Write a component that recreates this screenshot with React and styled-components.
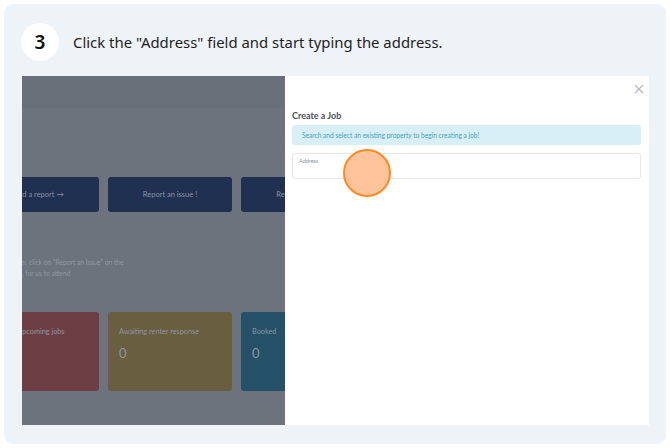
import React from 'react';
import styled, { createGlobalStyle } from 'styled-components';

const GlobalStyle = createGlobalStyle`
  html, body {
    margin: 0;
    padding: 0;
    background: #ffffff;
  }
  body {
    font-family: "Noto Sans", "Liberation Sans", sans-serif;
  }
`;

const buttons = ['Send a report →', 'Report an issue !', 'Request a quote'];

const cards = [
  { label: 'Upcoming jobs', value: '', color: '#6e3e45', width: 93 },
  { label: 'Awaiting renter response', value: '0', color: '#6a5e41', width: 124 },
  { label: 'Booked', value: '0', color: '#245068', width: 124 },
];

export default function App() {
  return (
    <>
      <GlobalStyle />
      <Card>
        <StepHeader>
          <StepNumber>3</StepNumber>
          <StepText>Click the "Address" field and start typing the address.</StepText>
        </StepHeader>
        <Shot>
          <Backdrop>
            <TopBand />
            <ButtonRow>
              {buttons.map((b) => (
                <ActionButton key={b}>{b}</ActionButton>
              ))}
            </ButtonRow>
            <HelpText>
              <div>n. click on "Report an Issue" on the</div>
              <div>. for us to attend</div>
            </HelpText>
            <StatRow>
              {cards.map((c) => (
                <StatCard key={c.label} $color={c.color} $width={c.width}>
                  <StatLabel>{c.label}</StatLabel>
                  <StatValue>{c.value}</StatValue>
                </StatCard>
              ))}
            </StatRow>
          </Backdrop>
          <Modal>
            <CloseRow>
              <svg width="10" height="10" viewBox="0 0 10 10">
                <path d="M1 1 L9 9 M9 1 L1 9" stroke="#b3b8bf" strokeWidth="1.1" fill="none" />
              </svg>
            </CloseRow>
            <ModalTitle>Create a Job</ModalTitle>
            <InfoBox>Search and select an existing property to begin creating a job!</InfoBox>
            <AddressField>
              <FieldLabel>Address</FieldLabel>
            </AddressField>
            <ClickMarker />
          </Modal>
        </Shot>
      </Card>
    </>
  );
}

const Card = styled.div`
  margin: 4px;
  width: 662px;
  height: 440px;
  box-sizing: border-box;
  background: #eef3f8;
  border-radius: 9px;
  padding: 16px 0 0 18px;
`;

const StepHeader = styled.div`
  display: flex;
  align-items: center;
  gap: 14px;
  height: 44px;
`;

const StepNumber = styled.div`
  width: 38px;
  height: 38px;
  border-radius: 50%;
  background: #ffffff;
  display: flex;
  align-items: center;
  justify-content: center;
  font-size: 19px;
  font-weight: 600;
  color: #111;
  margin-left: -1px;
`;

const StepText = styled.div`
  font-size: 14.9px;
  color: #1e1e1e;
`;

const Shot = styled.div`
  margin-top: 12px;
  width: 627px;
  height: 349px;
  display: flex;
  font-family: Lato, "Liberation Sans", sans-serif;
`;

const Backdrop = styled.div`
  width: 263px;
  overflow: hidden;
  background: #6c737d;
  display: flex;
  flex-direction: column;
`;

const TopBand = styled.div`
  height: 32px;
  flex-shrink: 0;
  background: #697079;
`;

const ButtonRow = styled.div`
  display: flex;
  gap: 9px;
  margin: 69px 0 0 -47px;
`;

const ActionButton = styled.div`
  flex-shrink: 0;
  width: 124px;
  height: 35px;
  border-radius: 3px;
  background: #1f3050;
  color: #8791a3;
  font-size: 7.5px;
  display: flex;
  align-items: center;
  justify-content: center;
`;

const HelpText = styled.div`
  margin-top: 45px;
  font-size: 6.7px;
  line-height: 11px;
  color: #9198a3;
  white-space: nowrap;
`;

const StatRow = styled.div`
  display: flex;
  gap: 9px;
  margin: 33px 0 0 -16px;
`;

const StatCard = styled.div`
  flex-shrink: 0;
  width: ${(p) => p.$width}px;
  height: 79px;
  border-radius: 3px;
  background: ${(p) => p.$color};
  box-sizing: border-box;
  padding: 15px 11px 0;
  color: #8d95a2;
`;

const StatLabel = styled.div`
  font-size: 7.3px;
`;

const StatValue = styled.div`
  margin-top: 9px;
  min-height: 16px;
  font-size: 13px;
`;

const Modal = styled.div`
  position: relative;
  width: 364px;
  background: #ffffff;
  box-sizing: border-box;
  padding: 8px 8px 0 7px;
`;

const CloseRow = styled.div`
  display: flex;
  justify-content: flex-end;
  margin-right: -3px;
  height: 10px;
`;

const ModalTitle = styled.div`
  margin-top: 16px;
  font-size: 9px;
  font-weight: 700;
  color: #4a4f58;
`;

const InfoBox = styled.div`
  margin-top: 4px;
  height: 20px;
  border-radius: 3px;
  background: #d8eff7;
  color: #3ea2c4;
  font-size: 6.6px;
  display: flex;
  align-items: center;
  padding-left: 10px;
`;

const AddressField = styled.div`
  margin-top: 8px;
  height: 26px;
  box-sizing: border-box;
  border: 1px solid #e4e7eb;
  border-radius: 3px;
  padding: 4px 0 0 6px;
`;

const FieldLabel = styled.div`
  font-size: 5.5px;
  color: #8b9099;
`;

const ClickMarker = styled.div`
  position: absolute;
  left: 58px;
  top: 73px;
  width: 48px;
  height: 48px;
  box-sizing: border-box;
  border-radius: 50%;
  border: 2.5px solid #ff8a1f;
  background: #ffc49b;
`;
